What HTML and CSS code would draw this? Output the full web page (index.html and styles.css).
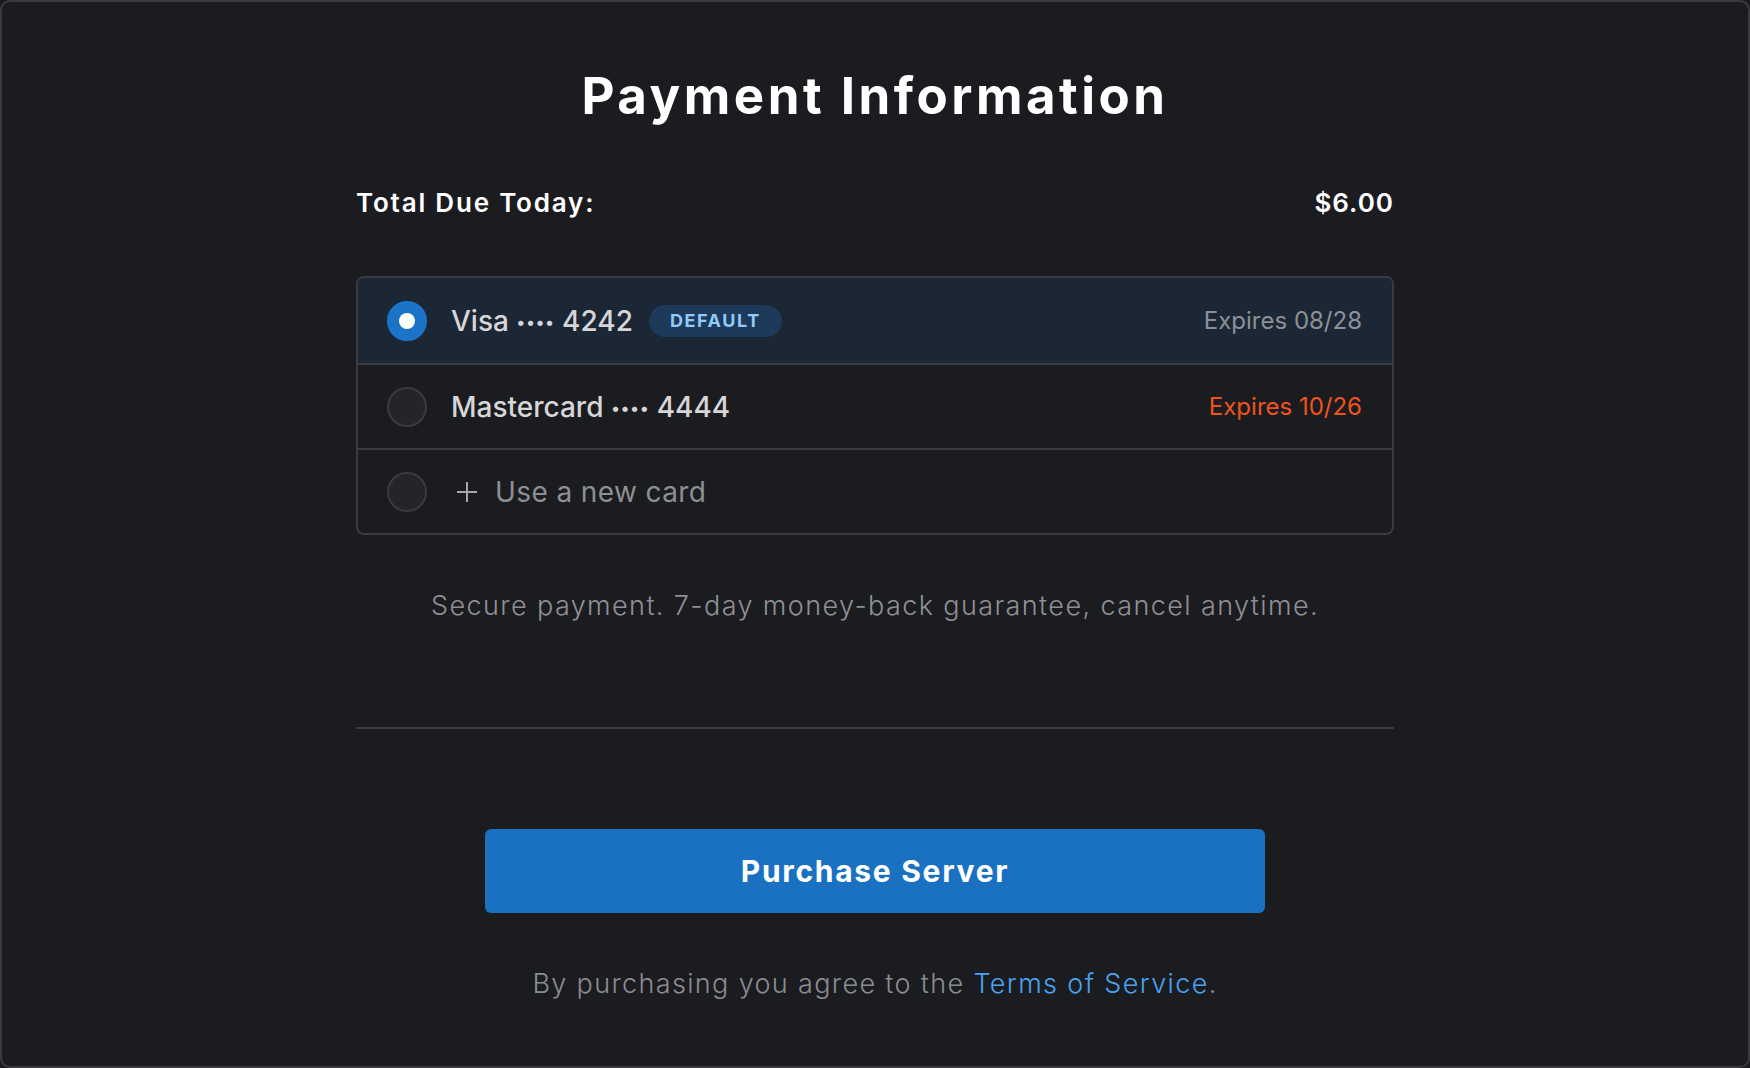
FILE: index.html
```html
<!DOCTYPE html>
<html lang="en">

<head>
    <meta charset="UTF-8">
    <meta name="viewport" content="width=device-width, initial-scale=1.0">
    <title>Payment Information</title>
    <link rel="stylesheet" href="styles.css">
</head>

<body>
    <div class="frame">
        <main class="checkout">
            <h1 class="title">Payment Information</h1>

            <div class="total-row">
                <span>Total Due Today:</span>
                <span class="amount">$6.00</span>
            </div>

            <ul class="card-list">
                <li class="card-row selected">
                    <span class="radio"></span>
                    <span class="card-name">Visa <span class="dots">••••</span> 4242</span>
                    <span class="badge">DEFAULT</span>
                    <span class="expires">Expires 08/28</span>
                </li>
                <li class="card-row">
                    <span class="radio"></span>
                    <span class="card-name">Mastercard <span class="dots">••••</span> 4444</span>
                    <span class="expires soon">Expires 10/26</span>
                </li>
                <li class="card-row">
                    <span class="radio"></span>
                    <svg class="plus" width="22" height="22" viewBox="0 0 22 22">
                        <path d="M11 1v20M1 11h20" stroke="currentColor" stroke-width="2" fill="none" />
                    </svg>
                    <span class="new-card">Use a new card</span>
                </li>
            </ul>

            <p class="secure">Secure payment. 7-day money-back guarantee, cancel anytime.</p>

            <hr class="divider">

            <button class="purchase">Purchase Server</button>

            <p class="terms">By purchasing you agree to the <a href="#">Terms of Service</a>.</p>
        </main>
    </div>
</body>

</html>
```

FILE: styles.css
```css
* {
    box-sizing: border-box;
}

html,
body {
    margin: 0;
    background-color: #1b1c20;
}

body {
    font-family: Inter, "Noto Sans", sans-serif;
    color: #ffffff;
}

.frame {
    height: 100vh;
    border: 2px solid #3a3b41;
    border-radius: 10px;
    padding-top: 64px;
}

.checkout {
    width: 1038px;
    margin: 0 auto;
    display: flex;
    flex-direction: column;
}

.title {
    margin: 0;
    font-size: 51px;
    line-height: 60px;
    font-weight: 700;
    letter-spacing: 3.5px;
    text-align: center;
}

.total-row {
    margin-top: 61px;
    display: flex;
    justify-content: space-between;
    font-size: 26px;
    line-height: 32px;
    font-weight: 600;
    letter-spacing: 1.8px;
}

.total-row .amount {
    letter-spacing: 1px;
}

.card-list {
    list-style: none;
    margin: 57px 0 0;
    padding: 0;
    border: 2px solid #3a3b41;
    border-radius: 8px;
    overflow: hidden;
}

.card-row {
    height: 85px;
    display: flex;
    align-items: center;
    padding: 0 30px 0 29px;
    border-top: 2px solid #3a3b41;
}

.card-row:first-child {
    border-top: none;
}

.card-row.selected {
    background-color: #1c2735;
}

.radio {
    width: 40px;
    height: 40px;
    border-radius: 50%;
    border: 2px solid #3a3b41;
    background-color: #242529;
    margin-right: 24px;
    flex-shrink: 0;
    display: flex;
    align-items: center;
    justify-content: center;
}

.selected .radio {
    border-color: #1b74c8;
    background-color: #1b74c8;
}

.selected .radio::after {
    content: "";
    width: 16px;
    height: 16px;
    border-radius: 50%;
    background-color: #ffffff;
}

.card-name {
    font-size: 28px;
    font-weight: 500;
    color: #d6d6d8;
}

.card-name .dots {
    font-size: 17px;
    letter-spacing: 0.5px;
    vertical-align: 3px;
}

.badge {
    margin-left: 16px;
    height: 32px;
    padding: 0 21px;
    border-radius: 16px;
    background-color: #1d3a5a;
    color: #91c9f7;
    font-size: 18px;
    font-weight: 700;
    letter-spacing: 1.6px;
    display: flex;
    align-items: center;
}

.expires {
    margin-left: auto;
    font-size: 24px;
    font-weight: 400;
    color: #8c9097;
}

.expires.soon {
    color: #f0531c;
}

.plus {
    color: #a6a7ab;
    margin: 0 17px 0 5px;
}

.new-card {
    font-size: 28px;
    font-weight: 400;
    color: #8d8f94;
    letter-spacing: 0.4px;
}

.secure {
    margin: 53px 0 0;
    text-align: center;
    font-size: 27px;
    line-height: 36px;
    font-weight: 300;
    letter-spacing: 1.4px;
    color: #8f9095;
}

.divider {
    margin: 103px 0 0;
    border: none;
    height: 2px;
    background-color: #3a3b41;
}

.purchase {
    margin: 100px auto 0;
    width: 780px;
    height: 84px;
    border: none;
    border-radius: 6px;
    background-color: #1a71c1;
    color: #ffffff;
    font-family: inherit;
    font-size: 30px;
    font-weight: 700;
    letter-spacing: 1.7px;
    cursor: pointer;
}

.terms {
    margin: 53px 0 0;
    text-align: center;
    font-size: 27px;
    line-height: 36px;
    font-weight: 300;
    letter-spacing: 1.35px;
    color: #8b8c91;
}

.terms a {
    color: #4aa3f0;
    text-decoration: none;
}
```
